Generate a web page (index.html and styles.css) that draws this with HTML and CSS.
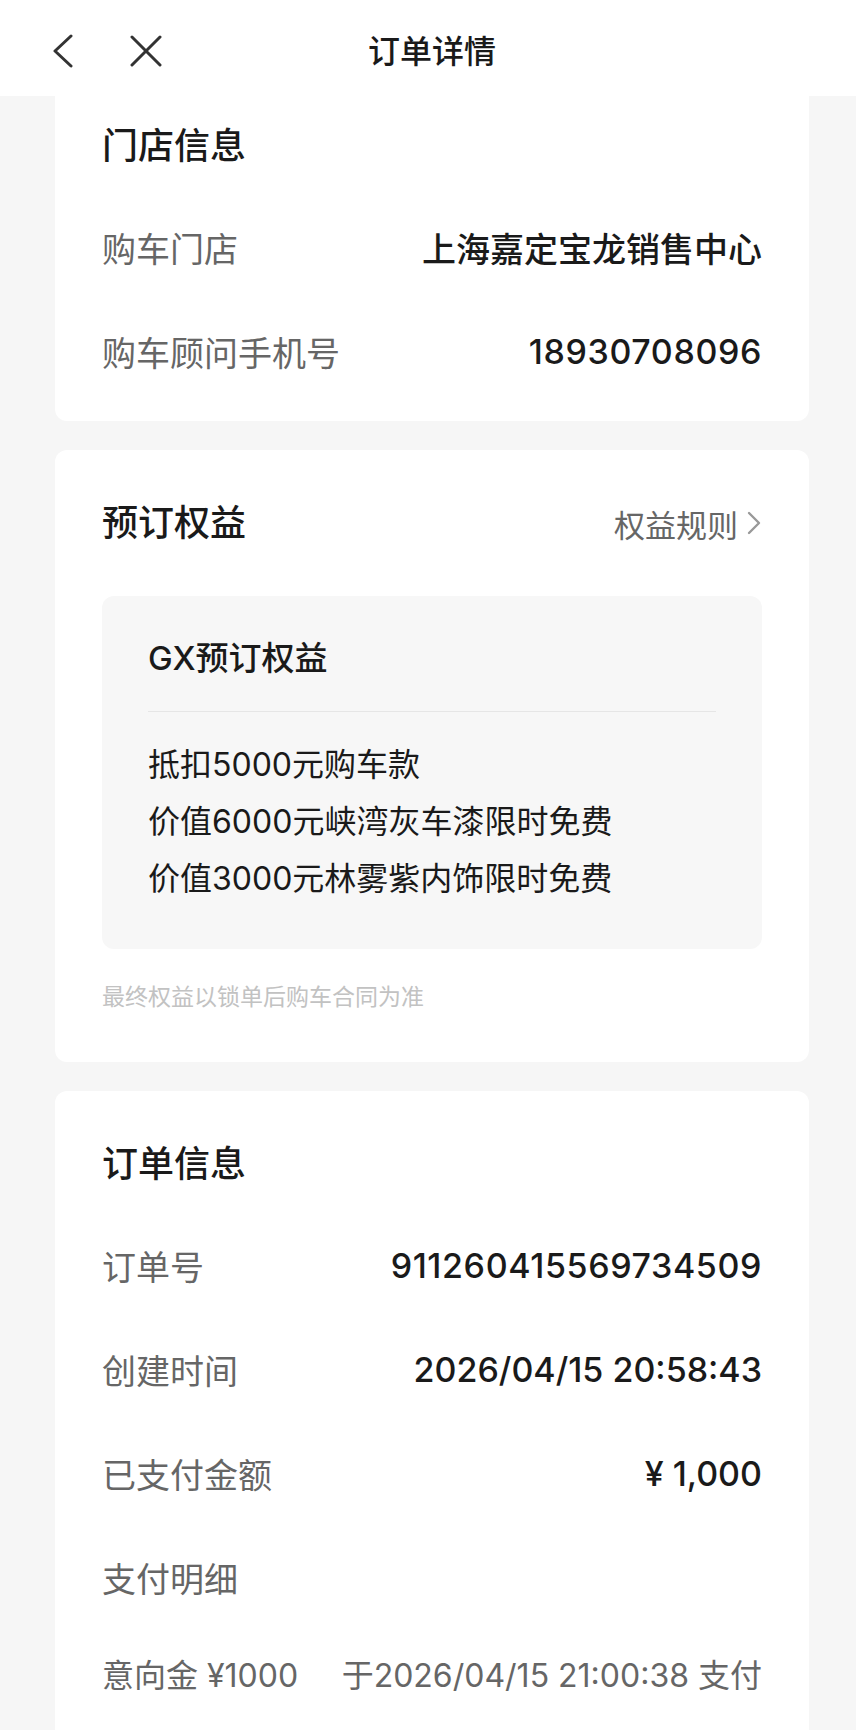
FILE: index.html
```html
<!DOCTYPE html>
<html lang="zh-CN">
<head>
  <meta charset="UTF-8" />
  <meta name="viewport" content="width=device-width, initial-scale=1.0"/>
  <title>订单详情</title>
  <link rel="stylesheet" href="styles.css">
</head>
<body>

  <header class="top-bar">
    <div class="top-actions">
      <svg class="icon-back" width="22" height="34" viewBox="0 0 22 34">
        <polyline points="19,2 3,17 19,32" fill="none" stroke="#333" stroke-width="3" stroke-linecap="round" stroke-linejoin="round"/>
      </svg>
      <svg class="icon-close" width="32" height="32" viewBox="0 0 32 32">
        <line x1="2" y1="2" x2="30" y2="30" stroke="#333" stroke-width="3" stroke-linecap="round"/>
        <line x1="30" y1="2" x2="2" y2="30" stroke="#333" stroke-width="3" stroke-linecap="round"/>
      </svg>
    </div>
    <h1 class="page-title">订单详情</h1>
  </header>

  <main class="content">

    <section class="card">
      <h2 class="card-title">门店信息</h2>
      <div class="rows">
        <div class="row">
          <span class="label">购车门店</span>
          <span class="value">上海嘉定宝龙销售中心</span>
        </div>
        <div class="row">
          <span class="label">购车顾问手机号</span>
          <span class="value num">18930708096</span>
        </div>
      </div>
    </section>

    <section class="card card-benefits">
      <div class="card-head">
        <h2 class="card-title">预订权益</h2>
        <a class="rules-link" href="#">权益规则
          <svg width="16" height="26" viewBox="0 0 16 26">
            <polyline points="3,3 13,13 3,23" fill="none" stroke="#999" stroke-width="2.4" stroke-linecap="round" stroke-linejoin="round"/>
          </svg>
        </a>
      </div>
      <div class="benefit-box">
        <div class="benefit-name">GX预订权益</div>
        <ul class="benefit-list">
          <li>抵扣5000元购车款</li>
          <li>价值6000元峡湾灰车漆限时免费</li>
          <li>价值3000元林雾紫内饰限时免费</li>
        </ul>
      </div>
      <p class="benefit-note">最终权益以锁单后购车合同为准</p>
    </section>

    <section class="card card-order">
      <h2 class="card-title">订单信息</h2>
      <div class="rows">
        <div class="row">
          <span class="label">订单号</span>
          <span class="value num">911260415569734509</span>
        </div>
        <div class="row">
          <span class="label">创建时间</span>
          <span class="value">2026/04/15 20:58:43</span>
        </div>
        <div class="row">
          <span class="label">已支付金额</span>
          <span class="value">¥ 1,000</span>
        </div>
        <div class="row">
          <span class="label">支付明细</span>
        </div>
        <div class="pay-line">
          <span>意向金 ¥1000</span>
          <span>于2026/04/15 21:00:38 支付</span>
        </div>
      </div>
    </section>

  </main>

</body>
</html>
```

FILE: styles.css
```css
body {
  margin: 0;
  background-color: #f6f6f6;
  color: #1a1a1a;
  font-family: "Inter", "Noto Sans CJK SC", sans-serif;
  overflow: hidden;
}

.top-bar {
  position: relative;
  z-index: 10;
  height: 96px;
  background-color: #fff;
  display: flex;
  align-items: center;
  justify-content: center;
}

.top-actions {
  position: absolute;
  left: 52px;
  top: 34px;
  display: flex;
  align-items: center;
  gap: 56px;
}

.page-title {
  margin: 0 0 0 8px;
  font-size: 32px;
  font-weight: 500;
  line-height: 44px;
  padding-top: 8px;
  color: #1a1a1a;
}

.content {
  margin-top: -23px;
  padding: 0 47px 0 55px;
}

.card {
  background-color: #fff;
  border-radius: 12px;
  padding: 48px 47px 18px;
  margin-bottom: 29px;
}

.card-title {
  margin: 0;
  font-size: 36px;
  font-weight: 500;
  line-height: 50px;
  color: #1a1a1a;
}

.rows {
  margin-top: 24px;
}

.row {
  height: 104px;
  display: flex;
  align-items: center;
  justify-content: space-between;
  font-size: 34px;
}

.label {
  color: #666;
}

.value {
  font-weight: 500;
  color: #1a1a1a;
}

.value.num {
  letter-spacing: 0.6px;
}

.card-head {
  display: flex;
  align-items: center;
  justify-content: space-between;
}

.rules-link {
  display: flex;
  align-items: center;
  gap: 8px;
  font-size: 31px;
  color: #666;
  text-decoration: none;
}

.benefit-box {
  margin-top: 48px;
  background-color: #f7f7f7;
  border-radius: 12px;
  padding: 38px 46px 42px;
}

.benefit-name {
  font-size: 33px;
  font-weight: 500;
  line-height: 48px;
  padding-bottom: 29px;
  border-bottom: 1px solid #e6e6e6;
}

.benefit-list {
  list-style: none;
  margin: 24px 0 0;
  padding: 0;
}

.benefit-list li {
  font-size: 32px;
  line-height: 57px;
}

.card-benefits {
  padding-bottom: 48px;
}

.benefit-note {
  margin: 31px 0 0;
  font-size: 23px;
  line-height: 34px;
  color: #c2c2c2;
}

.card-order {
  padding-bottom: 60px;
}

.pay-line {
  height: 88px;
  display: flex;
  align-items: center;
  justify-content: space-between;
  font-size: 32px;
  color: #666;
}
```
